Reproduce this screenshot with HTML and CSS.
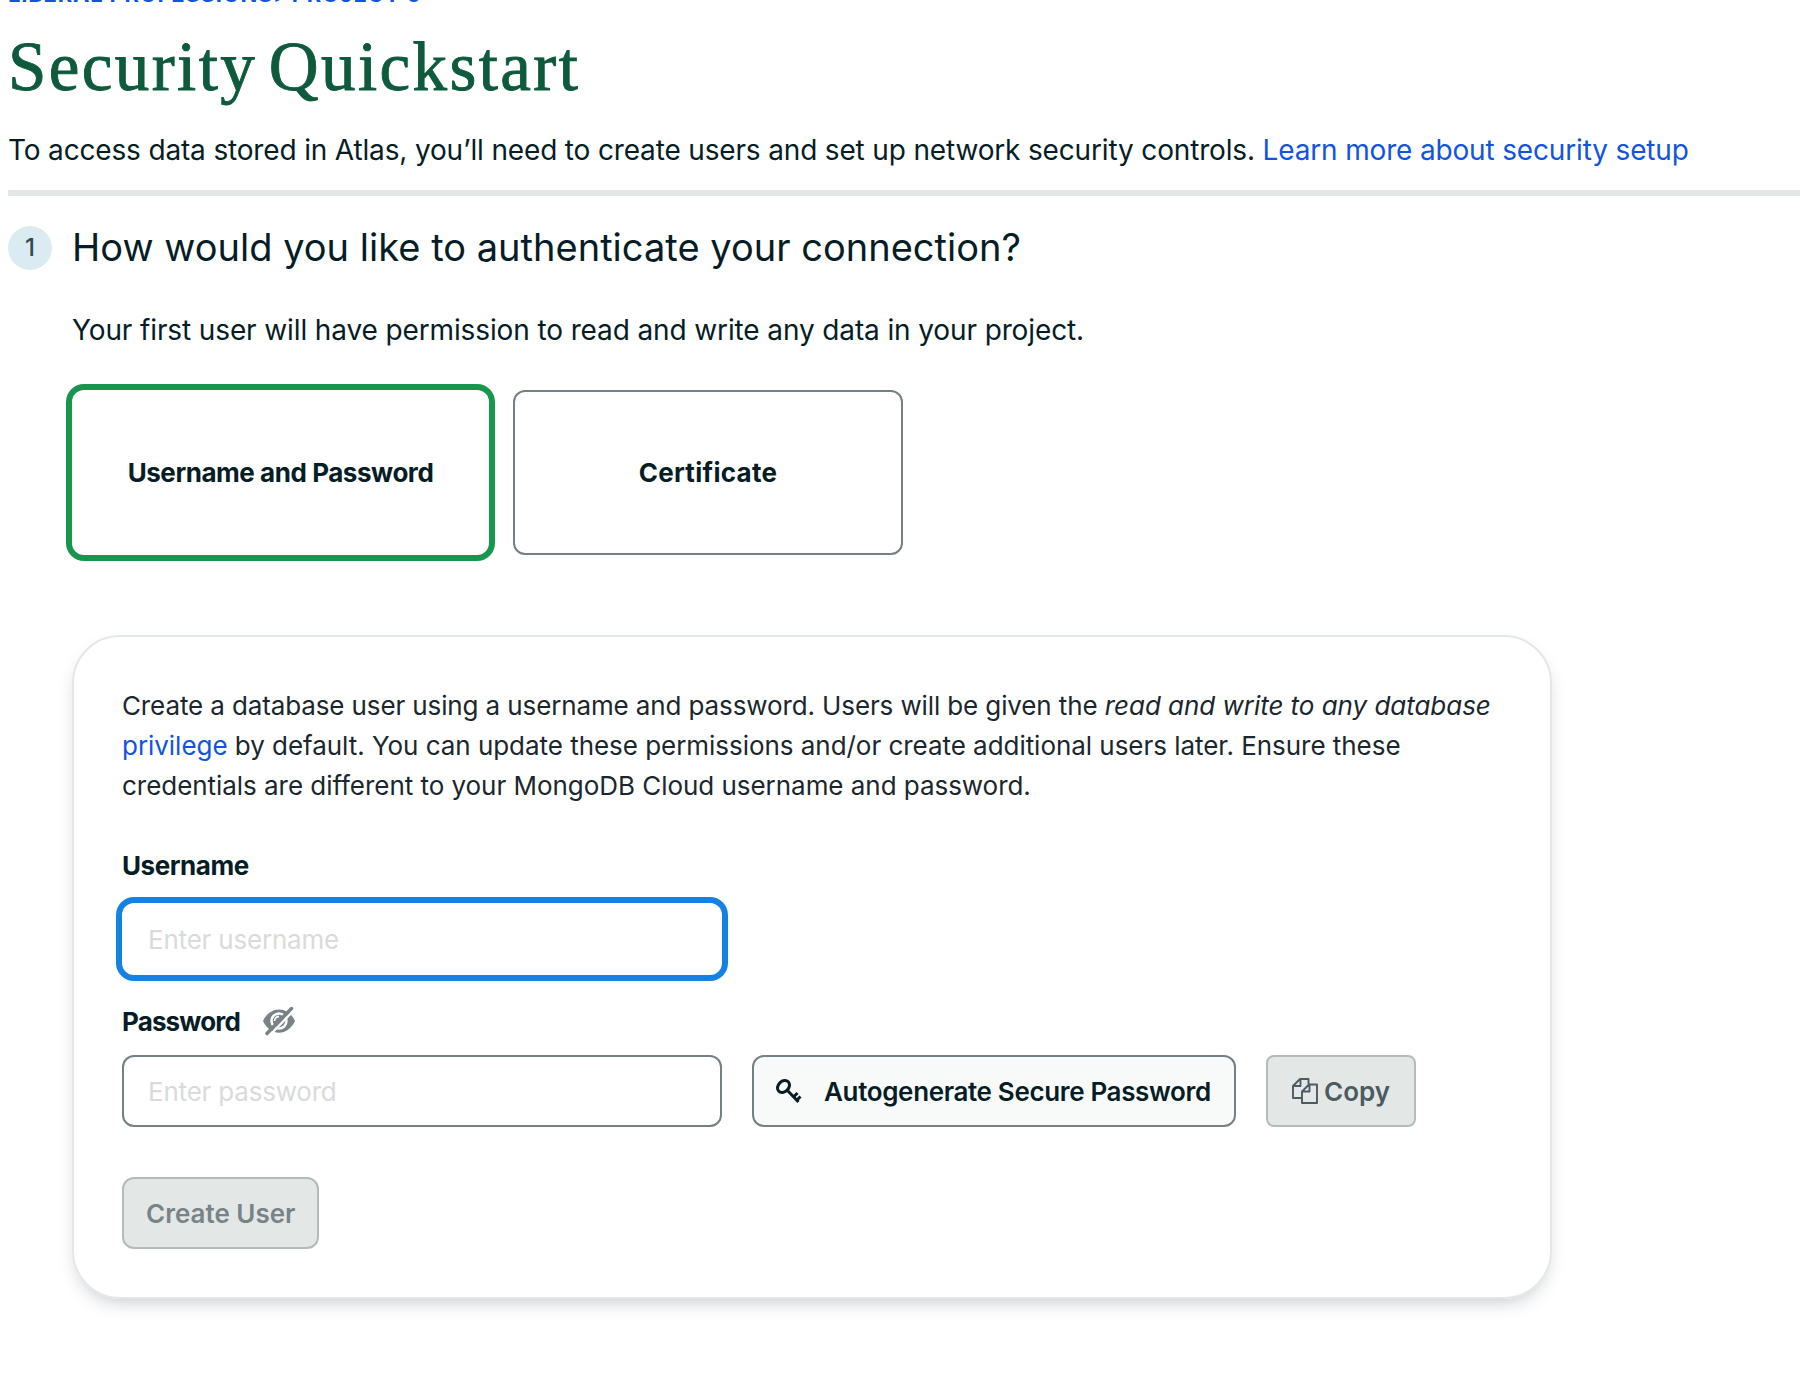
FILE: index.html
```html
<!DOCTYPE html>
<html lang="en">
<head>
    <meta charset="UTF-8">
    <meta name="viewport" content="width=device-width, initial-scale=1.0">
    <title>Security Quickstart</title>
    <link rel="stylesheet" href="styles.css">
</head>
<body>
    <header class="page-header">
        <div class="breadcrumb">LIBERAL PROFESSIONS<span class="arrow">&gt;</span> PROJECT 0</div>
        <h1>Security Quickstart</h1>
        <p class="intro">To access data stored in Atlas, you’ll need to create users and set up network security controls. <a href="#">Learn more about security setup</a></p>
    </header>
    <main>
        <div class="step">
            <span class="step-number">1</span>
            <h2>How would you like to authenticate your connection?</h2>
        </div>
        <div class="step-body">
            <p class="step-text">Your first user will have permission to read and write any data in your project.</p>
            <div class="options">
                <button class="option selected">Username and Password</button>
                <button class="option">Certificate</button>
            </div>
            <form class="panel">
                <p class="panel-text"><span class="tight">Create a database user using a username and password. Users will be given the</span> <em>read and write to any database</em><br>
                <a href="#">privilege</a> by default. You can update these permissions and/or create additional users later. Ensure these<br>
                credentials are different to your MongoDB Cloud username and password.</p>
                <label for="username">Username</label>
                <input class="focused" type="text" id="username" placeholder="Enter username">
                <label for="password">Password
                    <svg class="eye" width="34" height="30" viewBox="0 0 34 30">
                        <path d="M1 15C8-.5 26-.5 33 15 26 30.500 8 30.500 1 15Z" fill="#788287"/>
                        <circle cx="17" cy="15" r="7.500" fill="#788287" stroke="#fff" stroke-width="2.500"/>
                        <path d="M12.500 15a4.500 4.500 0 0 1 4.500-4.500" fill="none" stroke="#fff" stroke-width="1.800"/>
                        <path d="M8 29 32 4" stroke="#fff" stroke-width="2.500"/>
                        <path d="M5 27.500 29.500 2.500" stroke="#788287" stroke-width="3.500" stroke-linecap="round"/>
                    </svg>
                </label>
                <div class="password-row">
                    <input type="text" id="password" placeholder="Enter password">
                    <button type="button" class="btn generate">
                        <svg width="26" height="26" viewBox="0 0 26 26" fill="none" stroke="#061d26">
                            <ellipse cx="7.500" cy="8.500" rx="6.700" ry="5.200" stroke-width="3" transform="rotate(-45 7.500 8.500)"/>
                            <path d="M11.500 12.500 22.500 24M17.500 19l4-4M20.500 22.500l4-4" stroke-width="3"/>
                        </svg>
                        Autogenerate Secure Password
                    </button>
                    <button type="button" class="btn copy" disabled>
                        <svg width="26" height="26" viewBox="0 0 26 26" fill="none" stroke="#4c5b61" stroke-width="1.900" stroke-linejoin="round">
                            <path d="M9.500 20H1V8L8 1h8.500v5M8.500 1v7H1"/>
                            <path d="M25 6.500V25H10V13.500l7-7ZM17.500 6.500v7H10"/>
                        </svg>
                        Copy
                    </button>
                </div>
                <button type="button" class="btn create" disabled>Create User</button>
            </form>
        </div>
    </main>
</body>
</html>
```
FILE: styles.css
```css
* {
    box-sizing: border-box;
}

body {
    margin: 0;
    height: 1386px;
    overflow: hidden;
    background: #fff;
    color: #061d26;
    font-family: Inter, "Liberation Sans", sans-serif;
    font-size: 26px;
}

h1, h2, p {
    margin: 0;
    font-weight: 400;
    white-space: nowrap;
}

a {
    color: #1254de;
    text-decoration: none;
}

svg {
    flex-shrink: 0;
}

button, input {
    font-family: inherit;
    font-size: 26px;
    color: inherit;
}

.page-header {
    margin-left: 8px;
    height: 214px;
    border-bottom: 6px solid #e3e8e6;
}

.breadcrumb {
    height: 24px;
    margin-top: -18px;
    line-height: 24px;
    font-size: 22px;
    font-weight: 700;
    letter-spacing: 0.8px;
    color: #1254de;
}

.arrow {
    font-size: 20px;
    margin-right: -2px;
}

h1 {
    height: 114px;
    padding-top: 21px;
    line-height: 80px;
    font-family: "Liberation Serif", serif;
    font-size: 69px;
    letter-spacing: 2.4px;
    word-spacing: -8px;
    color: #0e5a3c;
    -webkit-text-stroke: 0.9px #0e5a3c;
}

.intro {
    height: 60px;
    line-height: 60px;
    font-size: 28px;
    letter-spacing: -0.16px;
}

.step {
    display: flex;
    align-items: center;
    gap: 20px;
    height: 44px;
    margin: 30px 0 0 8px;
}

.step-number {
    width: 44px;
    height: 44px;
    border-radius: 50%;
    background: #daecf2;
    color: #344950;
    line-height: 44px;
    text-align: center;
    font-size: 24px;
    font-weight: 500;
}

h2 {
    padding-bottom: 2px;
    font-size: 38px;
    letter-spacing: 0.02px;
}

.step-body {
    margin-left: 72px;
}

.step-text {
    padding-top: 40px;
    height: 120px;
    line-height: 40px;
    font-size: 28px;
    letter-spacing: -0.12px;
}

.options {
    display: flex;
    gap: 24px;
}

.option {
    width: 390px;
    height: 165px;
    border: 2px solid #748084;
    border-radius: 12px;
    background: #fff;
    font-weight: 700;
    letter-spacing: 0.3px;
}

.option.selected {
    width: 417px;
    border: none;
    letter-spacing: -0.45px;
    box-shadow: 0 0 0 6px #17964d;
}

.panel {
    width: 1480px;
    height: 664px;
    margin-top: 80px;
    padding: 49px 48px;
    border: 2px solid #e3e8e6;
    border-radius: 48px;
    box-shadow: 0 8px 20px -8px rgba(0, 20, 40, 0.3);
}

.panel-text {
    line-height: 40px;
    letter-spacing: -0.04px;
    color: #1b272e;
}

.tight {
    letter-spacing: -0.12px;
}

label {
    display: flex;
    align-items: center;
    gap: 22px;
    height: 40px;
    margin: 39px 0 18px;
    font-weight: 700;
    letter-spacing: -0.45px;
}

input {
    display: block;
    width: 600px;
    height: 72px;
    padding: 0 24px;
    border: 2px solid #748084;
    border-radius: 12px;
    outline: none;
    letter-spacing: -0.2px;
}

input::placeholder {
    color: #d9dbda;
}

input.focused {
    border-color: #fff;
    box-shadow: 0 0 0 6px #1482e4;
}

input.focused + label {
    margin: 26px 0 14px;
    letter-spacing: -0.85px;
}

.password-row {
    display: flex;
    gap: 30px;
}

.btn {
    display: flex;
    align-items: center;
    height: 72px;
    padding: 0 22px;
    border: 2px solid #b4bcb9;
    border-radius: 12px;
    background: #e3e8e6;
    font-weight: 600;
    white-space: nowrap;
}

.generate {
    width: 484px;
    gap: 22px;
    border-color: #748084;
    background: #f8faf9;
    letter-spacing: -0.35px;
}

.copy {
    width: 150px;
    gap: 6px;
    padding: 0 24px;
    border-radius: 8px;
    color: #4c5b61;
}

.create {
    width: 197px;
    margin-top: 50px;
    color: #788387;
}
```
